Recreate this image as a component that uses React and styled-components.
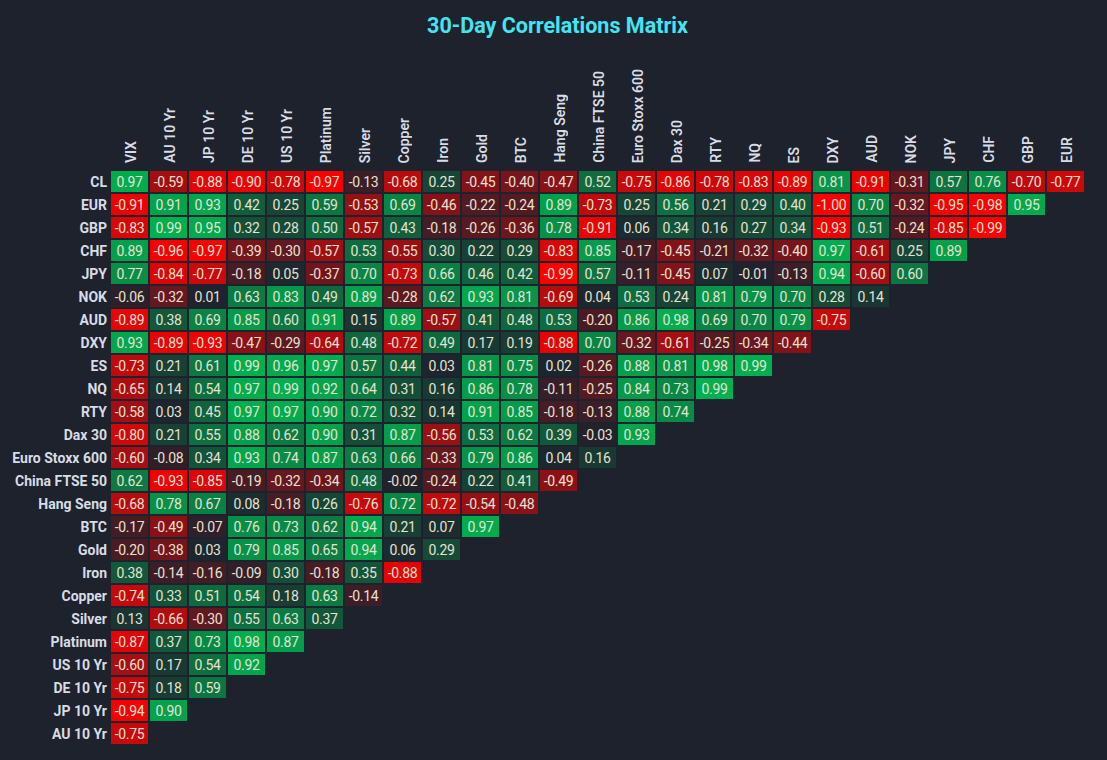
import React from "react";
import styled, { createGlobalStyle } from "styled-components";

const COLS = [
  "VIX", "AU 10 Yr", "JP 10 Yr", "DE 10 Yr", "US 10 Yr", "Platinum", "Silver", "Copper",
  "Iron", "Gold", "BTC", "Hang Seng", "China FTSE 50", "Euro Stoxx 600", "Dax 30", "RTY",
  "NQ", "ES", "DXY", "AUD", "NOK", "JPY", "CHF", "GBP", "EUR",
];

const ROWS = [
  ["CL", [0.97, -0.59, -0.88, -0.9, -0.78, -0.97, -0.13, -0.68, 0.25, -0.45, -0.4, -0.47, 0.52, -0.75, -0.86, -0.78, -0.83, -0.89, 0.81, -0.91, -0.31, 0.57, 0.76, -0.7, -0.77]],
  ["EUR", [-0.91, 0.91, 0.93, 0.42, 0.25, 0.59, -0.53, 0.69, -0.46, -0.22, -0.24, 0.89, -0.73, 0.25, 0.56, 0.21, 0.29, 0.4, -1.0, 0.7, -0.32, -0.95, -0.98, 0.95]],
  ["GBP", [-0.83, 0.99, 0.95, 0.32, 0.28, 0.5, -0.57, 0.43, -0.18, -0.26, -0.36, 0.78, -0.91, 0.06, 0.34, 0.16, 0.27, 0.34, -0.93, 0.51, -0.24, -0.85, -0.99]],
  ["CHF", [0.89, -0.96, -0.97, -0.39, -0.3, -0.57, 0.53, -0.55, 0.3, 0.22, 0.29, -0.83, 0.85, -0.17, -0.45, -0.21, -0.32, -0.4, 0.97, -0.61, 0.25, 0.89]],
  ["JPY", [0.77, -0.84, -0.77, -0.18, 0.05, -0.37, 0.7, -0.73, 0.66, 0.46, 0.42, -0.99, 0.57, -0.11, -0.45, 0.07, -0.01, -0.13, 0.94, -0.6, 0.6]],
  ["NOK", [-0.06, -0.32, 0.01, 0.63, 0.83, 0.49, 0.89, -0.28, 0.62, 0.93, 0.81, -0.69, 0.04, 0.53, 0.24, 0.81, 0.79, 0.7, 0.28, 0.14]],
  ["AUD", [-0.89, 0.38, 0.69, 0.85, 0.6, 0.91, 0.15, 0.89, -0.57, 0.41, 0.48, 0.53, -0.2, 0.86, 0.98, 0.69, 0.7, 0.79, -0.75]],
  ["DXY", [0.93, -0.89, -0.93, -0.47, -0.29, -0.64, 0.48, -0.72, 0.49, 0.17, 0.19, -0.88, 0.7, -0.32, -0.61, -0.25, -0.34, -0.44]],
  ["ES", [-0.73, 0.21, 0.61, 0.99, 0.96, 0.97, 0.57, 0.44, 0.03, 0.81, 0.75, 0.02, -0.26, 0.88, 0.81, 0.98, 0.99]],
  ["NQ", [-0.65, 0.14, 0.54, 0.97, 0.99, 0.92, 0.64, 0.31, 0.16, 0.86, 0.78, -0.11, -0.25, 0.84, 0.73, 0.99]],
  ["RTY", [-0.58, 0.03, 0.45, 0.97, 0.97, 0.9, 0.72, 0.32, 0.14, 0.91, 0.85, -0.18, -0.13, 0.88, 0.74]],
  ["Dax 30", [-0.8, 0.21, 0.55, 0.88, 0.62, 0.9, 0.31, 0.87, -0.56, 0.53, 0.62, 0.39, -0.03, 0.93]],
  ["Euro Stoxx 600", [-0.6, -0.08, 0.34, 0.93, 0.74, 0.87, 0.63, 0.66, -0.33, 0.79, 0.86, 0.04, 0.16]],
  ["China FTSE 50", [0.62, -0.93, -0.85, -0.19, -0.32, -0.34, 0.48, -0.02, -0.24, 0.22, 0.41, -0.49]],
  ["Hang Seng", [-0.68, 0.78, 0.67, 0.08, -0.18, 0.26, -0.76, 0.72, -0.72, -0.54, -0.48]],
  ["BTC", [-0.17, -0.49, -0.07, 0.76, 0.73, 0.62, 0.94, 0.21, 0.07, 0.97]],
  ["Gold", [-0.2, -0.38, 0.03, 0.79, 0.85, 0.65, 0.94, 0.06, 0.29]],
  ["Iron", [0.38, -0.14, -0.16, -0.09, 0.3, -0.18, 0.35, -0.88]],
  ["Copper", [-0.74, 0.33, 0.51, 0.54, 0.18, 0.63, -0.14]],
  ["Silver", [0.13, -0.66, -0.3, 0.55, 0.63, 0.37]],
  ["Platinum", [-0.87, 0.37, 0.73, 0.98, 0.87]],
  ["US 10 Yr", [-0.6, 0.17, 0.54, 0.92]],
  ["DE 10 Yr", [-0.75, 0.18, 0.59]],
  ["JP 10 Yr", [-0.94, 0.9]],
  ["AU 10 Yr", [-0.75]],
];

const BG = [30, 34, 45];
const POS = [0, 176, 80];
const NEG = [255, 0, 0];

function cellColor(v) {
  const t = Math.min(1, Math.abs(v));
  const target = v >= 0 ? POS : NEG;
  const c = BG.map((b, i) => Math.round(b + (target[i] - b) * t));
  return `rgb(${c[0]}, ${c[1]}, ${c[2]})`;
}

const GlobalStyle = createGlobalStyle`
  html, body {
    margin: 0;
    padding: 0;
    background: #1e222d;
  }
  body {
    font-family: Roboto, "Noto Sans", "Liberation Sans", sans-serif;
  }
`;

const Page = styled.div`
  width: 1107px;
  height: 760px;
  box-sizing: border-box;
  padding-top: 12px;
  background: #1e222d;
  overflow: hidden;
`;

const Title = styled.h1`
  margin: 0;
  padding-left: 8px;
  text-align: center;
  font-family: Roboto, "Noto Sans", sans-serif;
  font-weight: 700;
  font-size: 21.5px;
  line-height: 28px;
  color: #45e4f2;
`;

const Matrix = styled.div`
  display: grid;
  grid-template-columns: 109px repeat(25, 37px);
  grid-template-rows: 129px;
  grid-auto-rows: 21px;
  column-gap: 2px;
  row-gap: 2px;
`;

const Corner = styled.div`
  grid-column: 1;
  grid-row: 1;
`;

const HeadCell = styled.div`
  grid-row: 1;
  display: flex;
  align-items: flex-end;
  justify-content: center;
  padding-bottom: 6px;
  padding-left: 2px;
`;

const HeadText = styled.span`
  writing-mode: vertical-rl;
  transform: rotate(180deg);
  white-space: nowrap;
  font-weight: 600;
  font-size: 14px;
  line-height: 16px;
  color: #d8dce5;
`;

const RowLabel = styled.div`
  grid-column: 1;
  display: flex;
  align-items: center;
  justify-content: flex-end;
  padding-right: 2px;
  white-space: nowrap;
  font-weight: 700;
  font-size: 14px;
  color: #d8dce5;
`;

const Cell = styled.div`
  display: flex;
  align-items: center;
  justify-content: center;
  background: ${(p) => p.$bg};
  font-size: 14px;
  letter-spacing: -0.3px;
  color: #e6e1d1;
`;

export default function App() {
  return (
    <Page>
      <GlobalStyle />
      <Title>30-Day Correlations Matrix</Title>
      <Matrix>
        <Corner />
        {COLS.map((c) => (
          <HeadCell key={c}>
            <HeadText>{c}</HeadText>
          </HeadCell>
        ))}
        {ROWS.map(([name, vals]) => (
          <React.Fragment key={name}>
            <RowLabel>{name}</RowLabel>
            {vals.map((v, i) => (
              <Cell key={i} $bg={cellColor(v)}>
                {v.toFixed(2)}
              </Cell>
            ))}
          </React.Fragment>
        ))}
      </Matrix>
    </Page>
  );
}
